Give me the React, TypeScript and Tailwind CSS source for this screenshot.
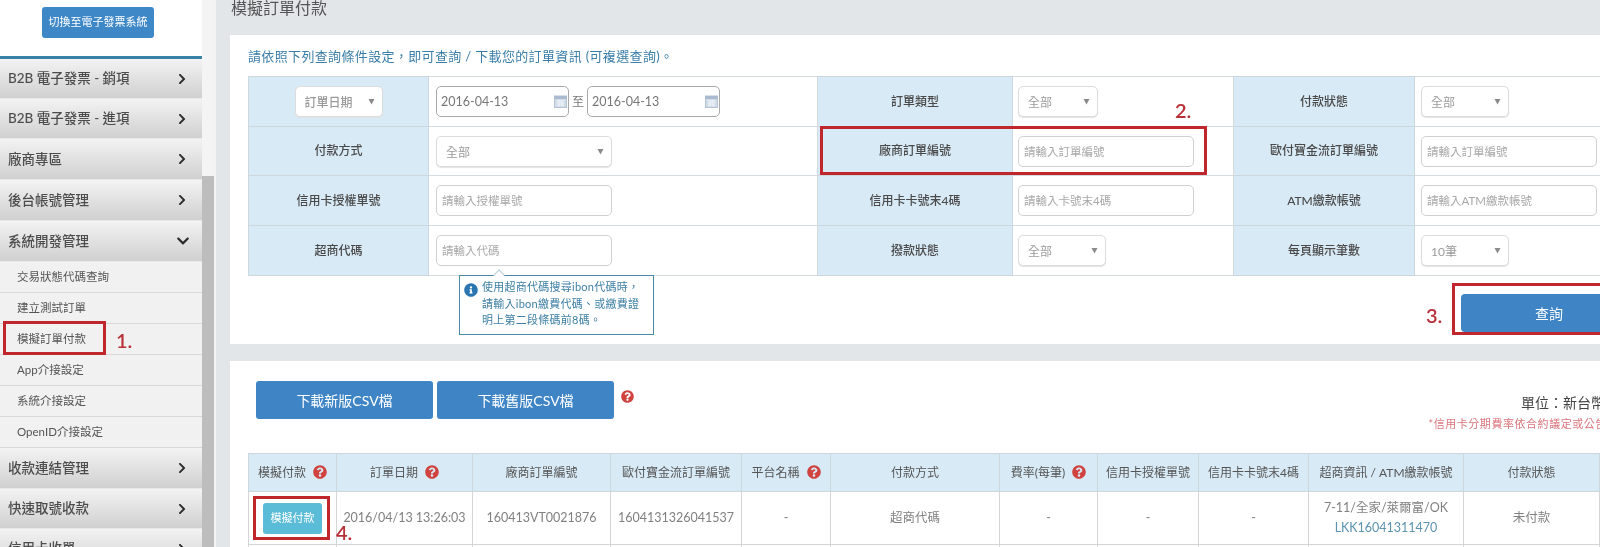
import React from "react";
import { FaChevronRight, FaChevronDown, FaQuestionCircle, FaInfoCircle } from "react-icons/fa";

const font = { fontFamily: '"Lato", "Noto Sans CJK TC", sans-serif' };

const Tri = () => (
  <svg width="7" height="7" viewBox="0 0 7 7" className="shrink-0">
    <path d="M0.5 1h6L3.5 6.5z" fill="#8a8a8a" />
  </svg>
);

const Cal = () => (
  <svg width="13" height="13" viewBox="0 0 13 13" className="shrink-0">
    <rect x="0.5" y="1" width="12" height="11.5" fill="#d3dde8" stroke="#b4c2d2" />
    <rect x="0.5" y="1" width="12" height="3" fill="#a9bbd0" />
    <path d="M3 6h7M3 8h7M3 10h7M5 5v6.5M8 5v6.5" stroke="#f4f7fa" strokeWidth="0.8" />
  </svg>
);

function Select({ text, w }: { text: string; w: string }) {
  return (
    <div className={`${w} h-[31px] flex items-center justify-between pl-[9px] pr-[7px] border border-[#dcdcdc] rounded-[5px] bg-white shadow-[0_1px_1px_#e4e4e4] text-[12px] text-[#9a9a9a]`}>
      <span className="pt-[3px]">{text}</span>
      <Tri />
    </div>
  );
}

function TextInput({ ph, w = "w-[176px]" }: { ph: string; w?: string }) {
  return (
    <input
      readOnly
      placeholder={ph}
      className={`${w} h-[31px] px-[5px] border border-[#d0d0d0] rounded-[5px] bg-white text-[11.5px] outline-none placeholder:text-[#a8a8a8]`}
    />
  );
}

function DateInput() {
  return (
    <div className="w-[133px] h-[31px] flex items-center justify-between pl-[4px] pr-[1px] border border-[#a9a9a9] rounded-[5px] bg-white text-[12.5px] text-[#777]">
      <span className="pt-[1px]">2016-04-13</span>
      <Cal />
    </div>
  );
}

const Label = ({ children }: { children: React.ReactNode }) => (
  <td className="bg-[#d8eaf5] border border-[#cdd7de] text-center text-[12px] font-medium text-[#4a4a4a] p-0">{children}</td>
);
const Ctl = ({ children, className = "pl-[7px]" }: { children: React.ReactNode; className?: string }) => (
  <td className={`border border-[#d5dade] ${className}`}>{children}</td>
);

const Help = () => <FaQuestionCircle className="inline-block text-[#d0433f] ml-[7px] align-[-2px]" size={14} />;

const menuTop: [string, string][] = [
  ["B2B 電子發票 - 銷項", "h-[40px]"],
  ["B2B 電子發票 - 進項", "h-[40px]"],
  ["廠商專區", "h-[41px]"],
  ["後台帳號管理", "h-[41px]"],
];
const subs = ["交易狀態代碼查詢", "建立測試訂單", "模擬訂單付款", "App介接設定", "系統介接設定", "OpenID介接設定"];

function MenuItem({ text, open = false, h = "h-[40px]" }: { text: string; open?: boolean; h?: string }) {
  return (
    <div className={`${h} shrink-0 flex items-center justify-between pl-[8px] ${open ? "pr-[12px]" : "pr-[14px]"} bg-linear-to-b from-[#f3f3f3] to-[#d0d0d0] border-b border-[#e8e8e8] text-[13.5px] font-medium text-[#4d4d4d]`}>
      <span>{text}</span>
      {open ? <FaChevronDown size={14} className="text-[#2b2b2b]" /> : <FaChevronRight size={12} className="text-[#2b2b2b]" />}
    </div>
  );
}

const Th = ({ children }: { children: React.ReactNode }) => (
  <th className="bg-[#d8eaf5] border border-[#cdd7de] text-center text-[12px] font-normal text-[#555] p-0 whitespace-nowrap">{children}</th>
);
const Td = ({ children }: { children: React.ReactNode }) => (
  <td className="border border-[#d5d5d5] text-center text-[12.5px] text-[#808080] p-0 whitespace-nowrap">{children}</td>
);

const Mark = ({ className, children }: { className: string; children?: React.ReactNode }) => (
  <div className={`absolute pointer-events-none ${className}`}>{children}</div>
);

export default function App() {
  return (
    <div className="relative w-[1600px] h-[547px] overflow-hidden flex bg-[#e3e6e9] blur-[0.35px]" style={font}>
      {/* sidebar */}
      <aside className="w-[202px] shrink-0 h-full bg-white flex flex-col overflow-hidden">
        <div className="h-[56px] shrink-0 flex justify-center pt-[7px]">
          <button className="w-[112px] h-[31px] rounded-[3px] bg-[#3f88c8] text-white text-[11px] mr-[6px]">切換至電子發票系統</button>
        </div>
        <div className="h-[3px] shrink-0 bg-[#3a81a9]" />
        {menuTop.map(([t, h]) => (
          <MenuItem key={t} text={t} h={h} />
        ))}
        <MenuItem text="系統開發管理" open h="h-[41px]" />
        <div className="bg-[#f1f1f1]">
          {subs.map((s) => (
            <div key={s} className="h-[31px] flex items-center pl-[17px] border-b border-[#d9d9d9] text-[11.5px] text-[#555]">{s}</div>
          ))}
        </div>
        <MenuItem text="收款連結管理" h="h-[41px]" />
        <MenuItem text="快速取號收款" />
        <MenuItem text="信用卡收單" />
      </aside>
      {/* scrollbar */}
      <div className="w-[12px] shrink-0 h-full flex flex-col">
        <div className="h-[176px] bg-[#f4f4f4]" />
        <div className="flex-1 bg-[#bdbdbd]" />
      </div>
      <div className="w-[2px] shrink-0 bg-[#f3f3f3]" />

      {/* main */}
      <main className="flex-1 min-w-0 pl-[14px] overflow-hidden">
        <h1 className="h-[35px] pl-[1px] text-[16px] leading-[16px] text-[#555] font-normal">模擬訂單付款</h1>

        <section className="h-[309px] bg-white pl-[18px] overflow-hidden">
          <p className="h-[41px] pt-[12px] text-[13px] leading-[18px] tracking-[0.35px] text-[#3a7ea8]">
            {"請依照下列查詢條件設定\uFF0C即可查詢 / 下載您的訂單資訊 (可複選查詢)\u3002"}
          </p>
          <table className="table-fixed border-collapse w-[1356px]">
            <colgroup>
              <col className="w-[180px]" />
              <col className="w-[389px]" />
              <col className="w-[195px]" />
              <col className="w-[221px]" />
              <col className="w-[181px]" />
              <col className="w-[190px]" />
            </colgroup>
            <tbody>
              <tr className="h-[50px]">
                <Label>
                  <div className="flex justify-center text-left">
                    <Select text="訂單日期" w="w-[88px]" />
                  </div>
                </Label>
                <Ctl>
                  <div className="flex items-center gap-[3px] text-[12px] text-[#777]">
                    <DateInput />
                    <span>至</span>
                    <DateInput />
                  </div>
                </Ctl>
                <Label>訂單類型</Label>
                <Ctl className="pl-[5px]"><Select text="全部" w="w-[80px]" /></Ctl>
                <Label>付款狀態</Label>
                <Ctl className="pl-[6px]"><Select text="全部" w="w-[88px]" /></Ctl>
              </tr>
              <tr className="h-[49px]">
                <Label>付款方式</Label>
                <Ctl><Select text="全部" w="w-[176px]" /></Ctl>
                <Label>廠商訂單編號</Label>
                <Ctl className="pl-[5px]"><TextInput ph="請輸入訂單編號" /></Ctl>
                <Label>歐付寶金流訂單編號</Label>
                <Ctl className="pl-[6px]"><TextInput ph="請輸入訂單編號" /></Ctl>
              </tr>
              <tr className="h-[50px]">
                <Label>信用卡授權單號</Label>
                <Ctl><TextInput ph="請輸入授權單號" /></Ctl>
                <Label>信用卡卡號末4碼</Label>
                <Ctl className="pl-[5px]"><TextInput ph="請輸入卡號末4碼" /></Ctl>
                <Label>ATM繳款帳號</Label>
                <Ctl className="pl-[6px]"><TextInput ph="請輸入ATM繳款帳號" /></Ctl>
              </tr>
              <tr className="h-[50px]">
                <Label>超商代碼</Label>
                <Ctl className="pl-[7px] relative">
                  <TextInput ph="請輸入代碼" />
                  <div className="absolute left-[30px] top-[49px] w-[195px] h-[60px] z-10 bg-white border border-[#4b8aa6] pl-[22px] pr-[4px] pt-[3px] text-[11px] leading-[16.5px] tracking-[0.25px] text-[#3d7fa5] whitespace-nowrap">
                    <div className="absolute top-[-5px] left-[35px] w-[8px] h-[8px] rotate-45 bg-white border-l border-t border-[#b7ccd6]" />
                    <FaInfoCircle size={14} className="absolute left-[4px] top-[7px] text-[#2a76b3]" />
                    {"使用超商代碼搜尋ibon代碼時\uFF0C"}<br />{"請輸入ibon繳費代碼\u3001或繳費證"}<br />{"明上第二段條碼前8碼\u3002"}
                  </div>
                </Ctl>
                <Label>撥款狀態</Label>
                <Ctl className="pl-[5px]"><Select text="全部" w="w-[88px]" /></Ctl>
                <Label>每頁顯示筆數</Label>
                <Ctl className="pl-[6px]"><Select text="10筆" w="w-[88px]" /></Ctl>
              </tr>
            </tbody>
          </table>
          <button className="mt-[18px] ml-[1213px] block w-[176px] h-[38px] rounded-[4px] bg-[#3f85c6] text-white text-[14px]">查詢</button>
        </section>

        <section className="mt-[17px] bg-white pl-[18px] h-[200px] overflow-hidden">
          <div className="w-[1382px] h-[92px] pt-[20px] pl-[8px] flex items-start">
            <button className="w-[177px] h-[38px] rounded-[3px] bg-[#3f85c6] text-white text-[14px]">下載新版CSV檔</button>
            <button className="w-[177px] h-[38px] ml-[4px] rounded-[3px] bg-[#3f85c6] text-white text-[14px]">下載舊版CSV檔</button>
            <FaQuestionCircle size={13} className="text-[#d0433f] ml-[7px] mt-[9px]" />
            <div className="ml-auto flex flex-col items-end">
              <div className="text-[14px] leading-[20px] mt-[12px] text-[#444] whitespace-nowrap">{"單位\uFF1A新台幣 (元)"}</div>
              <div className="text-[11px] leading-[16px] mt-[3px] tracking-[0.55px] text-[#d9757b] whitespace-nowrap">*信用卡分期費率依合約議定或公告為準</div>
            </div>
          </div>
          <table className="table-fixed border-collapse w-[1440px]">
            <colgroup>
              {[88, 136, 138, 131, 89, 169, 98, 101, 110, 155, 136, 89].map((w, i) => (
                <col key={i} style={{ width: w }} />
              ))}
            </colgroup>
            <thead>
              <tr className="h-[38px]">
                <Th>模擬付款<Help /></Th>
                <Th>訂單日期<Help /></Th>
                <Th>廠商訂單編號</Th>
                <Th>歐付寶金流訂單編號</Th>
                <Th>平台名稱<Help /></Th>
                <Th>付款方式</Th>
                <Th>費率(每筆)<Help /></Th>
                <Th>信用卡授權單號</Th>
                <Th>信用卡卡號末4碼</Th>
                <Th>超商資訊 / ATM繳款帳號</Th>
                <Th>付款狀態</Th>
                <Th> </Th>
              </tr>
            </thead>
            <tbody>
              <tr className="h-[53px]">
                <Td>
                  <button className="w-[59px] h-[31px] rounded-[3px] bg-[#5bbcd8] text-white text-[11px]">模擬付款</button>
                </Td>
                <Td>2016/04/13 13:26:03</Td>
                <Td>160413VT0021876</Td>
                <Td>1604131326041537</Td>
                <Td>-</Td>
                <Td>超商代碼</Td>
                <Td>-</Td>
                <Td>-</Td>
                <Td>-</Td>
                <Td>
                  <div className="leading-[20px]">7-11/全家/萊爾富/OK</div>
                  <div className="leading-[20px] text-[#5b93b0]">LKK16041311470</div>
                </Td>
                <Td>未付款</Td>
                <Td> </Td>
              </tr>
              <tr className="h-[40px]">
                {Array.from({ length: 12 }).map((_, i) => (
                  <Td key={i}> </Td>
                ))}
              </tr>
            </tbody>
          </table>
        </section>
      </main>

      {/* annotations */}
      <Mark className="left-[3px] top-[321px] w-[103px] h-[34px] border-[3px] border-[#c0272d]" />
      <Mark className="left-[116px] top-[328px] text-[20px] leading-[24px] font-semibold text-[#b83038]">1.</Mark>
      <Mark className="left-[820px] top-[126px] w-[387px] h-[49px] border-[3px] border-[#c0272d]" />
      <Mark className="left-[1175px] top-[98px] text-[20px] leading-[24px] font-semibold text-[#b83038]">2.</Mark>
      <Mark className="left-[1452px] top-[283px] w-[160px] h-[52px] border-[3px] border-[#c0272d]" />
      <Mark className="left-[1426px] top-[303px] text-[20px] leading-[24px] font-semibold text-[#b83038]">3.</Mark>
      <Mark className="left-[253px] top-[496px] w-[77px] h-[44px] border-[3px] border-[#c0272d]" />
      <Mark className="left-[336px] top-[520px] text-[20px] leading-[24px] font-semibold text-[#b83038]">4.</Mark>
    </div>
  );
}
